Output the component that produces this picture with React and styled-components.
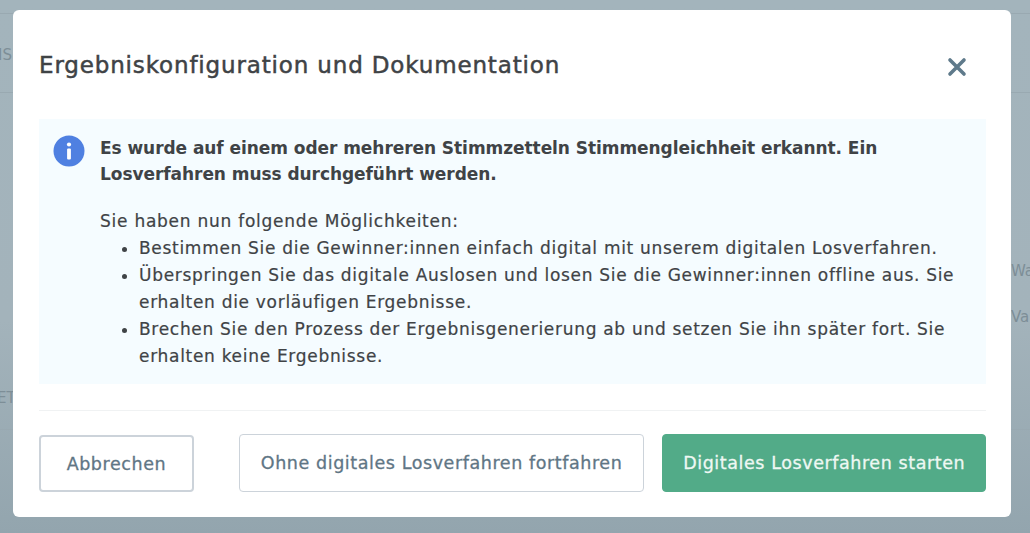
import React from "react"
import styled, { createGlobalStyle } from "styled-components"

const GlobalStyle = createGlobalStyle`
  html, body {
    margin: 0;
    padding: 0;
  }
  body {
    font-family: "DejaVu Sans", "Liberation Sans", sans-serif;
    background: #a2b2ba;
  }
`

const Backdrop = styled.div`
  position: relative;
  width: 1030px;
  height: 533px;
  overflow: hidden;
  box-sizing: border-box;
  padding: 10px 19px 16px 13px;
  background: linear-gradient(180deg, #a3b4bc 0%, #a3b3bb 60%, #93a5ae 100%);
`

const PageScrap = styled.span`
  position: absolute;
  left: ${p => p.$left}px;
  top: ${p => p.$top}px;
  font-size: 15px;
  line-height: 18px;
  color: #7d8e97;
  white-space: nowrap;
`

const PageLine = styled.div`
  position: absolute;
  left: 0;
  right: 0;
  top: ${p => p.$top}px;
  height: 1px;
  background: #99a9b1;
`

const Modal = styled.div`
  position: relative;
  height: 507px;
  box-sizing: border-box;
  padding: 0 25px 25px 26px;
  background: #fff;
  border-radius: 6px;
  display: flex;
  flex-direction: column;
`

const Header = styled.div`
  height: 109px;
  flex: none;
  display: flex;
  align-items: flex-start;
  justify-content: space-between;
  padding-top: 40px;
  box-sizing: border-box;
`

const Title = styled.h2`
  margin: 0;
  font-size: 23px;
  line-height: 30px;
  font-weight: 400;
  color: #3f4346;
  letter-spacing: 0.85px;
  -webkit-text-stroke: 0.5px #3f4346;
`

const CloseButton = styled.button`
  border: 0;
  background: none;
  padding: 0;
  margin: 7px 19px 0 0;
  width: 20px;
  height: 20px;
  color: #5f7a8b;
  display: flex;
`

const Alert = styled.div`
  height: 265px;
  flex: none;
  box-sizing: border-box;
  background: #f5fcff;
  padding: 16px 14px 0 14px;
  display: flex;
  gap: 15px;
`

const InfoIcon = styled.svg`
  flex: none;
  width: 32px;
  height: 32px;
`

const AlertBody = styled.div`
  flex: 1;
  color: #3f4346;
  font-size: 17px;
`

const Lead = styled.p`
  margin: 0 0 21px;
  font-weight: 700;
  line-height: 26px;
  letter-spacing: -0.06px;
`

const Intro = styled.p`
  margin: 0;
  line-height: 27px;
  letter-spacing: 0.75px;
  -webkit-text-stroke: 0.2px #3f4346;
`

const Options = styled.ul`
  margin: 0;
  padding: 0 0 0 39px;
  line-height: 27px;
  letter-spacing: 0.7px;
  -webkit-text-stroke: 0.2px #3f4346;
`

const Divider = styled.hr`
  margin: 26px 0 0;
  border: 0;
  height: 1px;
  background: #f0f2f3;
  flex: none;
`

const Footer = styled.div`
  margin-top: 23px;
  display: flex;
  align-items: flex-start;
`

const Button = styled.button`
  box-sizing: border-box;
  height: 58px;
  width: ${p => p.$width}px;
  margin-left: ${p => p.$gap || 0}px;
  font-family: inherit;
  font-size: 17.5px;
  font-weight: 400;
  letter-spacing: 0.58px;
  border-radius: 4px;
  white-space: nowrap;
  padding: 0;
  color: ${p => (p.$primary ? "#eef8f3" : "#5f7685")};
  background: ${p => (p.$primary ? "#52ab88" : "#fff")};
  border: ${p => (p.$primary ? "1px solid #52ab88" : "1px solid #ccd3da")};
  -webkit-text-stroke: 0.3px ${p => (p.$primary ? "#eef8f3" : "#5f7685")};
`

const CancelButton = styled(Button)`
  border-width: 2px;
  margin-top: 1px;
  height: 57px;
`

export default function App() {
  return (
    <>
      <GlobalStyle />
      <Backdrop>
        <PageLine $top={13} />
        <PageLine $top={92} />
        <PageLine $top={429} />
        <PageScrap $left={-2} $top={46}>IS</PageScrap>
        <PageScrap $left={1011} $top={262}>Wa</PageScrap>
        <PageScrap $left={1011} $top={308}>Va</PageScrap>
        <PageScrap $left={-3} $top={389}>ET</PageScrap>
        <Modal>
          <Header>
            <Title>Ergebniskonfiguration und Dokumentation</Title>
            <CloseButton aria-label="Schließen">
              <svg viewBox="0 0 20 20" width="20" height="20" fill="none">
                <path d="M3 3 L17 17 M17 3 L3 17" stroke="currentColor" strokeWidth="3.6" strokeLinecap="round" />
              </svg>
            </CloseButton>
          </Header>
          <Alert>
            <InfoIcon viewBox="0 0 32 32">
              <circle cx="16" cy="16" r="15.5" fill="#4f80e1" />
              <circle cx="16" cy="9.5" r="2.1" fill="#fff" />
              <rect x="14.1" y="13.5" width="3.8" height="11" rx="1" fill="#fff" />
            </InfoIcon>
            <AlertBody>
              <Lead>
                Es wurde auf einem oder mehreren Stimmzetteln Stimmengleichheit erkannt. Ein Losverfahren muss durchgeführt werden.
              </Lead>
              <Intro>Sie haben nun folgende Möglichkeiten:</Intro>
              <Options>
                <li>Bestimmen Sie die Gewinner:innen einfach digital mit unserem digitalen Losverfahren.</li>
                <li>Überspringen Sie das digitale Auslosen und losen Sie die Gewinner:innen offline aus. Sie erhalten die vorläufigen Ergebnisse.</li>
                <li>Brechen Sie den Prozess der Ergebnisgenerierung ab und setzen Sie ihn später fort. Sie erhalten keine Ergebnisse.</li>
              </Options>
            </AlertBody>
          </Alert>
          <Divider />
          <Footer>
            <CancelButton $width={155}>Abbrechen</CancelButton>
            <Button $width={406} $gap={45}>Ohne digitales Losverfahren fortfahren</Button>
            <Button $width={324} $gap={18} $primary>Digitales Losverfahren starten</Button>
          </Footer>
        </Modal>
      </Backdrop>
    </>
  )
}
